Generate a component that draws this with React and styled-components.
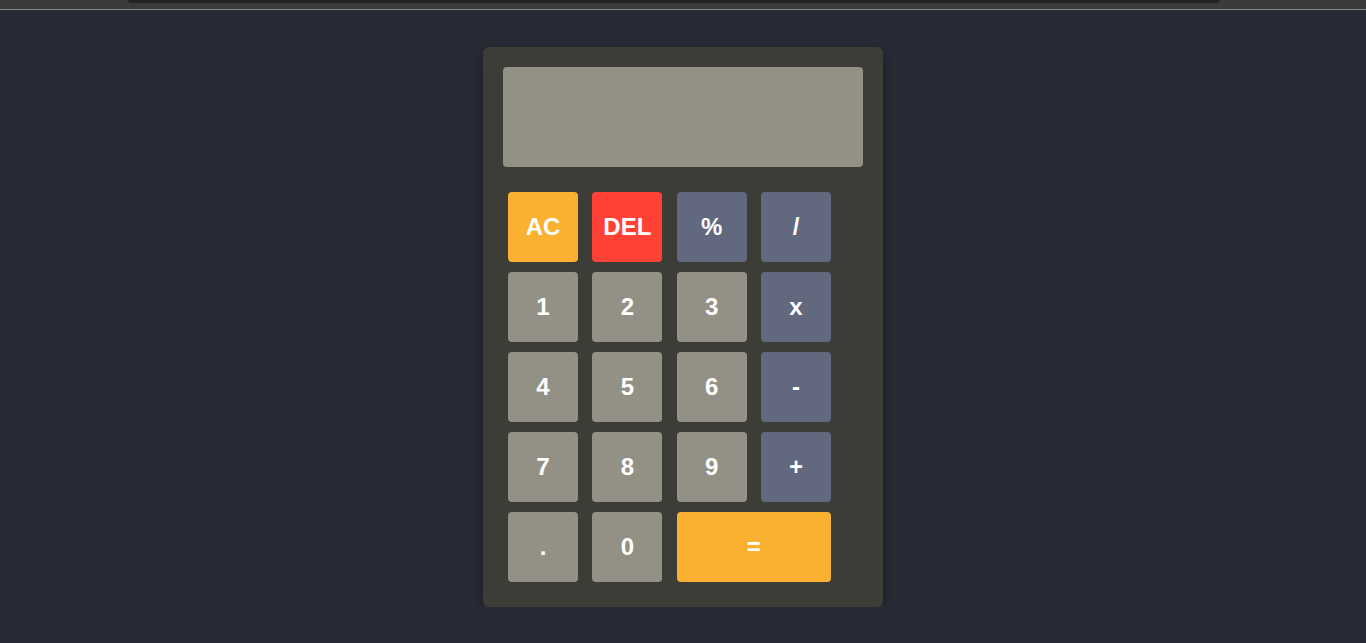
import React, { useState } from 'react';
import styled, { createGlobalStyle } from 'styled-components';

const GlobalStyle = createGlobalStyle`
  html, body {
    margin: 0;
    padding: 0;
    background: #282b35;
    font-family: 'Liberation Sans', Arial, sans-serif;
  }
  * {
    box-sizing: border-box;
  }
`;

const TopStrip = styled.div`
  height: 10px;
  background: #3b3b3b;
  border-bottom: 1px solid #8a8a8a;
  padding: 0 146px 0 128px;
`;

const TabShade = styled.div`
  height: 3px;
  background: #222326;
  border-radius: 0 0 5px 5px;
`;

const Page = styled.main`
  display: flex;
  justify-content: center;
  padding-top: 37px;
`;

const Calculator = styled.div`
  width: 400px;
  padding: 20px;
  background: #3d3d37;
  border-radius: 6px;
  box-shadow: 0 4px 14px rgba(0, 0, 0, 0.35);
`;

const Display = styled.div`
  height: 100px;
  background: #939186;
  border-radius: 4px;
  padding: 10px 14px;
  display: flex;
  align-items: flex-end;
  justify-content: flex-end;
  color: #ffffff;
  font-size: 32px;
  font-weight: 700;
  overflow: hidden;
`;

const Keypad = styled.div`
  display: grid;
  grid-template-columns: repeat(4, 70px);
  grid-auto-rows: 70px;
  column-gap: 14.33px;
  row-gap: 10px;
  margin-top: 20px;
  padding: 5px;
`;

const colors = {
  clear: '#fab131',
  delete: '#ff4136',
  operator: '#62687d',
  digit: '#939186',
};

const Key = styled.button`
  grid-column: span ${props => props.span || 1};
  border: none;
  border-radius: 4px;
  background: ${props => colors[props.kind] || colors.digit};
  color: #ffffff;
  font-family: 'Liberation Sans', Arial, sans-serif;
  font-size: 24px;
  font-weight: 700;
  cursor: pointer;
  display: flex;
  align-items: center;
  justify-content: center;
  padding: 0;

  &:hover {
    filter: brightness(1.05);
  }
`;

const keys = [
  { label: 'AC', kind: 'clear' },
  { label: 'DEL', kind: 'delete' },
  { label: '%', kind: 'operator' },
  { label: '/', kind: 'operator' },
  { label: '1' },
  { label: '2' },
  { label: '3' },
  { label: 'x', kind: 'operator' },
  { label: '4' },
  { label: '5' },
  { label: '6' },
  { label: '-', kind: 'operator' },
  { label: '7' },
  { label: '8' },
  { label: '9' },
  { label: '+', kind: 'operator' },
  { label: '.' },
  { label: '0' },
  { label: '=', kind: 'clear', span: 2 },
];

const App = () => {
  const [expr, setExpr] = useState('');

  const press = (label) => {
    if (label === 'AC') return setExpr('');
    if (label === 'DEL') return setExpr(expr.slice(0, -1));
    if (label === '=') {
      try {
        // eslint-disable-next-line no-new-func
        const result = Function(`return (${expr.replace(/x/g, '*')})`)();
        setExpr(String(result));
      } catch (e) {
        setExpr('Error');
      }
      return;
    }
    setExpr(expr + label);
  };

  return (
    <>
      <GlobalStyle />
      <TopStrip>
        <TabShade />
      </TopStrip>
      <Page>
        <Calculator>
          <Display>{expr}</Display>
          <Keypad>
            {keys.map((key) => (
              <Key
                key={key.label}
                kind={key.kind}
                span={key.span}
                onClick={() => press(key.label)}
              >
                {key.label}
              </Key>
            ))}
          </Keypad>
        </Calculator>
      </Page>
    </>
  );
};

export default App;
